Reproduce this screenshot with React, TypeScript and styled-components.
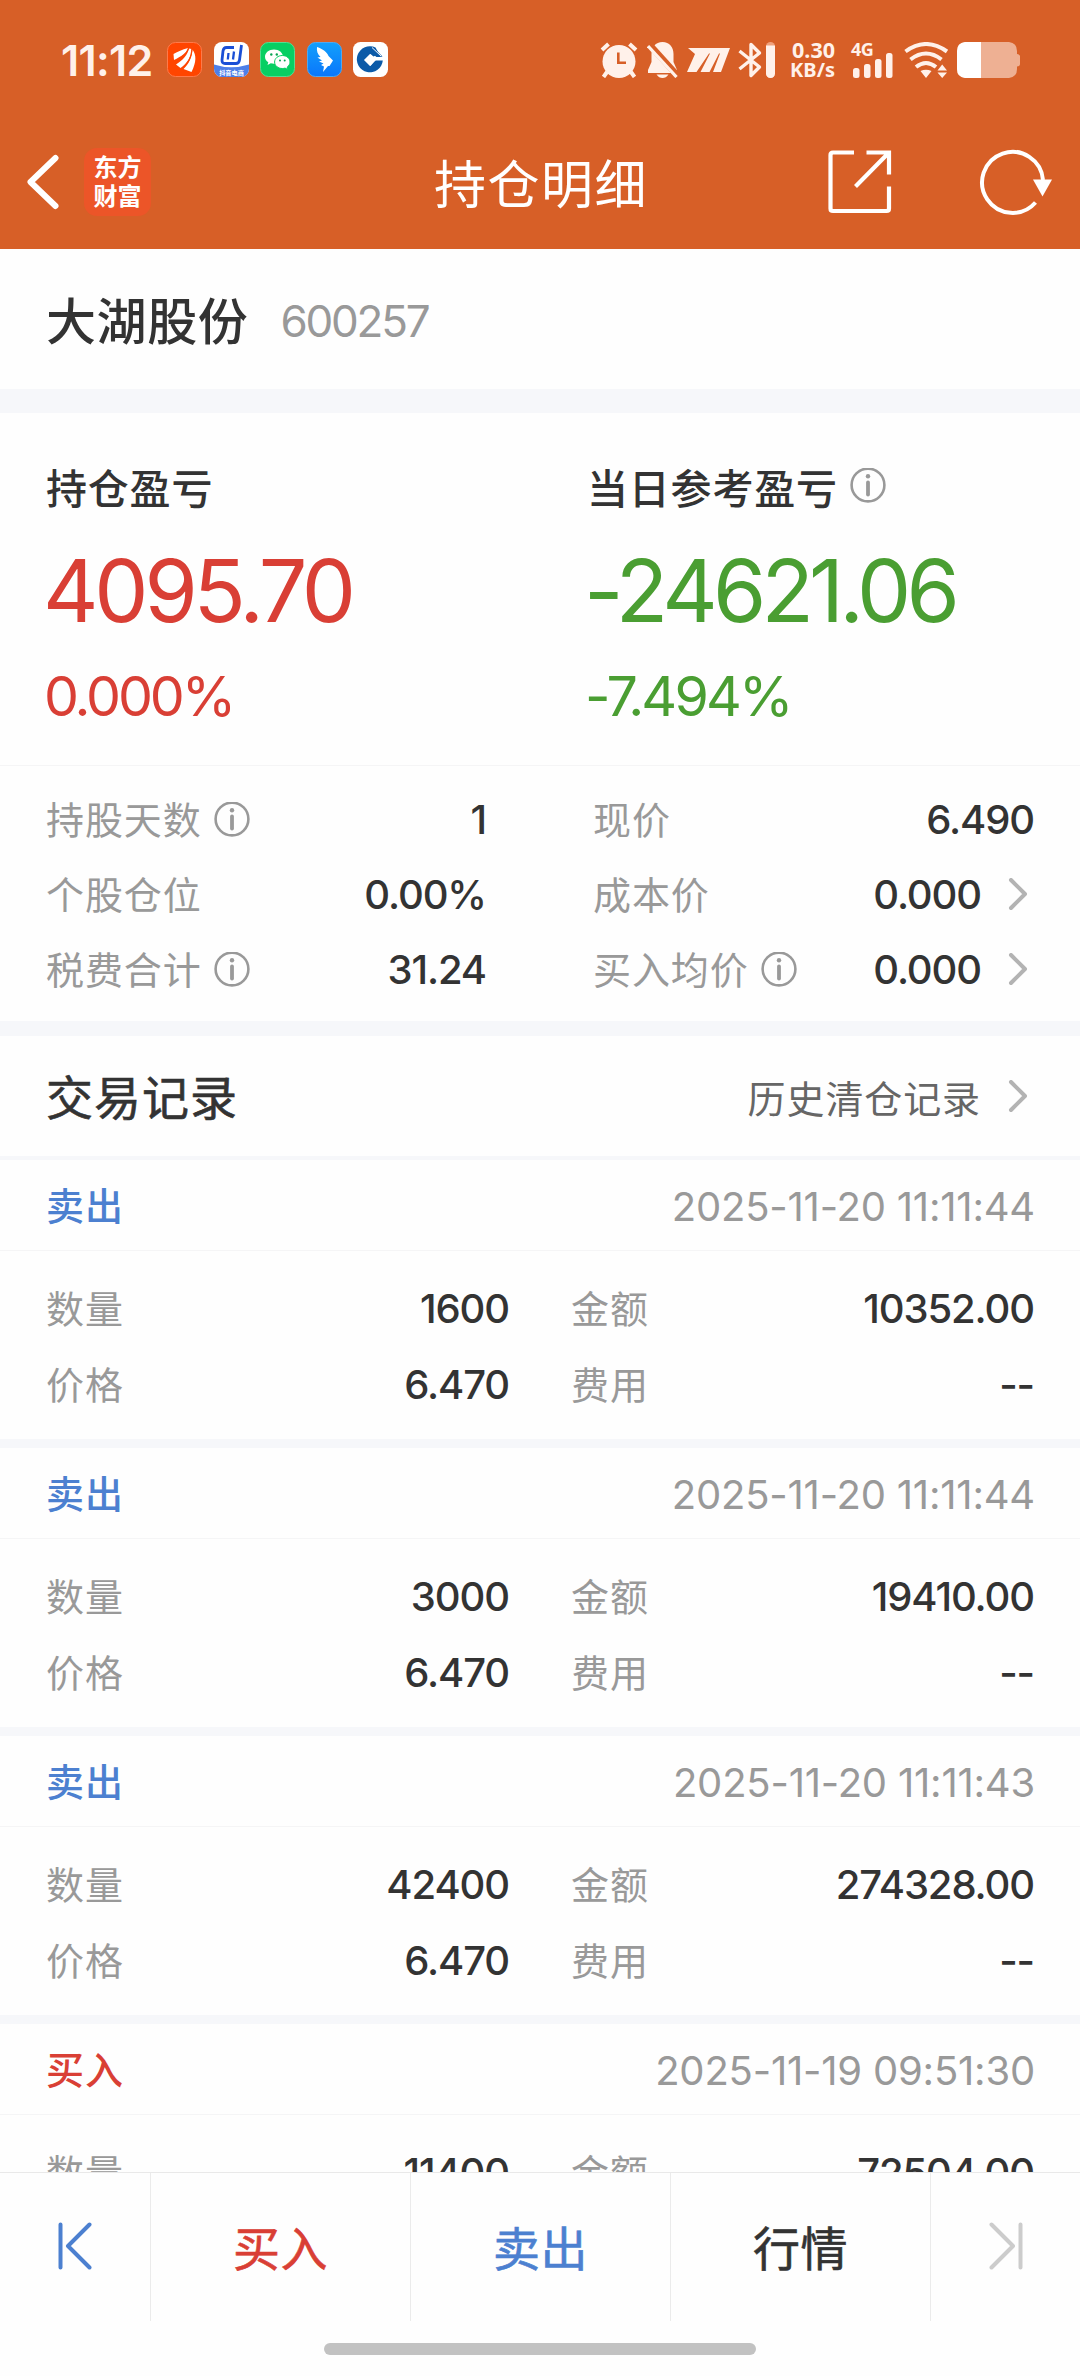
import React from "react";
import styled, { createGlobalStyle } from "styled-components";

const cjk = `"Noto Sans CJK SC", sans-serif`;
const num = `Inter, "Noto Sans CJK SC", sans-serif`;
const c = {
  brand: "#d75f27",
  page: "#fefefe",
  band: "#f6f7fa",
  hair: "#f5f5f6",
  ink: "#333333",
  mid: "#666666",
  soft: "#999999",
  red: "#d93f35",
  green: "#4a9e32",
  blue: "#4c80d0",
};

const Global = createGlobalStyle`
  * { box-sizing: border-box; }
  body { margin: 0; background: ${c.page}; }
`;

const Screen = styled.div`
  width: 1080px;
  height: 2376px;
  overflow: hidden;
  display: flex;
  flex-direction: column;
  background: ${c.page};
  color: ${c.ink};
  font-family: ${cjk};
  font-size: 38px;
  white-space: nowrap;
`;

const Top = styled.header`
  flex: none;
  height: 249px;
  background: ${c.brand};
  color: #fff;
`;
const StatusBar = styled.div`
  height: 119px;
  padding: 0 60px 0 61px;
  display: flex;
  align-items: center;
  color: #fff1ea;
`;
const Clock = styled.span`
  width: 106px;
  font: 600 43px/44px ${num};
  letter-spacing: -0.7px;
`;
const AppIcons = styled.div`
  display: flex;
  gap: 11.6px;
  flex: 1;
`;
const Glyph = styled.svg<{ $ml?: number }>`
  display: block;
  flex: none;
  margin-left: ${(p) => p.$ml ?? 0}px;
`;
const NetSpeed = styled.div`
  width: 46px;
  margin-left: 13px;
  display: flex;
  flex-direction: column;
  align-items: flex-end;
  font: 700 20px/20px "Noto Sans", sans-serif;
`;
const SpeedValue = styled.span`
  font-size: 21.5px;
`;
const Cellular = styled.div`
  width: 43px;
  height: 36px;
  margin-left: 16px;
  display: grid;
`;
const NetType = styled.span`
  grid-area: 1 / 1;
  margin-top: -3px;
  font: 700 18px/20px "Noto Sans", sans-serif;
  letter-spacing: -0.5px;
`;
const Bars = styled.svg`
  grid-area: 1 / 1;
  display: block;
`;

const TitleBar = styled.div`
  height: 130px;
  padding: 0 27px 5px;
  display: grid;
  grid-template-columns: 1fr auto 1fr;
  align-items: center;
`;
const TitleLeft = styled.div`
  display: flex;
  align-items: center;
  gap: 25px;
`;
const TitleRight = styled.div`
  display: flex;
  justify-content: flex-end;
  align-items: center;
  gap: 86px;
`;
const Title = styled.h1`
  margin: 0 0 0 2px;
  font: 400 52px/70px ${cjk};
  letter-spacing: 1.5px;
`;
const Logo = styled.div`
  width: 67px;
  height: 68px;
  padding-top: 3px;
  border-radius: 13px;
  background: #ec5528;
  text-align: center;
  font: 700 24px/29px ${cjk};
`;

const StockHead = styled.section`
  flex: none;
  height: 140px;
  padding: 0 46px 0;
  display: flex;
  align-items: center;
`;
const StockName = styled.h2`
  margin: -3px 32px 0 0;
  font: 500 50px/60px ${cjk};
  letter-spacing: 0.6px;
`;
const Code = styled.span`
  margin-top: 3px;
  font: 400 44px/50px ${num};
  letter-spacing: -2.2px;
  color: ${c.soft};
`;
const Band = styled.div<{ $h: number }>`
  flex: none;
  height: ${(p) => p.$h}px;
  background: ${c.band};
`;

const Profit = styled.section`
  flex: none;
  height: 353px;
  padding: 48px 46px 0;
  display: grid;
  grid-template-columns: 541px 1fr;
  border-bottom: 1px solid ${c.hair};
`;
const ProfitLabel = styled.div`
  height: 50px;
  display: flex;
  align-items: center;
  gap: 12px;
  font: 500 41px/50px ${cjk};
  letter-spacing: 0.8px;
`;
const ProfitValue = styled.div<{ $tone: string; $ls: number }>`
  margin: 30px 0 0 -3px;
  font: 400 86px/100px ${num};
  letter-spacing: ${(p) => p.$ls}px;
  color: ${(p) => p.$tone};
`;
const ProfitRate = styled.div<{ $tone: string; $ls: number }>`
  margin: 25px 0 0 -2px;
  font: 400 55.5px/60px ${num};
  letter-spacing: ${(p) => p.$ls}px;
  color: ${(p) => p.$tone};
`;

const Facts = styled.section`
  flex: none;
  height: 255px;
  padding: 16px 46px 0;
  display: grid;
  grid-template-columns: 440px 441px;
  grid-auto-rows: 75px;
  column-gap: 107px;
`;
const Fact = styled.div`
  display: flex;
  align-items: center;
`;
const Label = styled.span`
  margin: -4px 12px 0 0;
  font: 400 38px/50px ${cjk};
  letter-spacing: 0.9px;
  color: ${c.soft};
`;
const Value = styled.span`
  margin-left: auto;
  font: 500 40px/50px ${num};
  letter-spacing: -1.1px;
`;

const SectionHead = styled.section`
  flex: none;
  height: 120px;
  padding: 2px 46px 0 46px;
  display: flex;
  align-items: center;
`;
const SectionTitle = styled.h3`
  margin: -4px auto 0 0;
  font: 400 47px/60px ${cjk};
  letter-spacing: 1px;
  -webkit-text-stroke: 0.6px;
`;
const HistoryLink = styled.span`
  font: 400 38px/50px ${cjk};
  letter-spacing: 0.9px;
  color: ${c.mid};
`;

const List = styled.section`
  flex: 1;
  min-height: 0;
  overflow: hidden;
`;
const Record = styled.article`
  height: 288px;
  border-bottom: 9px solid ${c.band};
`;
const RecordHead = styled.div`
  height: 91px;
  padding: 0 45px 0 46px;
  display: flex;
  align-items: center;
  justify-content: space-between;
  border-bottom: 1px solid ${c.hair};
`;
const Side = styled.span<{ $tone: string }>`
  margin-top: -2px;
  font: 500 38px/50px ${cjk};
  letter-spacing: 0.9px;
  color: ${(p) => p.$tone};
`;
const Time = styled.time`
  margin-top: 3px;
  font: 400 40px/50px ${num};
  letter-spacing: -0.2px;
  color: ${c.soft};
`;
const RecordBody = styled.div`
  padding: 20px 46px 0;
  display: grid;
  grid-template-columns: 463px 463px;
  grid-auto-rows: 76px;
  column-gap: 62px;
`;

const Nav = styled.nav`
  flex: none;
  height: 149px;
  display: grid;
  grid-template-columns: 150px 260px 260px 260px 150px;
  border-top: 1px solid #e9e9e9;
`;
const NavItem = styled.div<{ $tone: string }>`
  display: flex;
  align-items: center;
  justify-content: center;
  padding-bottom: 2px;
  font: 400 47px/60px ${cjk};
  letter-spacing: 0.6px;
  -webkit-text-stroke: 0.6px;
  color: ${(p) => p.$tone};
  & + & {
    border-left: 1px solid #ebebeb;
  }
`;
const HomeArea = styled.div`
  flex: none;
  height: 55px;
  padding-top: 22px;
`;
const HomePill = styled.div`
  width: 432px;
  height: 12px;
  margin: 0 auto;
  border-radius: 6px;
  background: #c2c2c2;
`;

const Info = () => (
  <Glyph width="36" height="36" viewBox="0 0 36 36" fill="none" stroke={c.soft}>
    <circle cx="18" cy="17" r="16.400" strokeWidth="2.600" />
    <circle cx="18" cy="8.200" r="2.200" fill={c.soft} stroke="none" />
    <path d="M18 14.500V26.500" strokeWidth="3.800" strokeLinecap="round" />
  </Glyph>
);
const Chevron = () => (
  <Glyph $ml={27} width="26" height="34" viewBox="0 0 26 34" fill="none" stroke="#b3b3b3" strokeWidth="4" strokeLinecap="round" strokeLinejoin="round">
    <path d="M3 2L17 16L3 30" />
  </Glyph>
);

const AppTiles = () => (
  <AppIcons>
    <Glyph width="35" height="35" viewBox="0 0 35 35">
      <rect x=".5" y=".5" width="34" height="34" rx="8" fill="#ff4500" stroke="#ff7a4a" />
      <path d="M6.500 12C11 9.500 15 7.500 21 6C20 11 14 14.500 7 18Z" fill="#fff" />
      <path d="M9 22.500C16 18 20.500 13 22 6.500L24.500 7C24.500 15 20 21.500 13.500 26Z" fill="#fff" />
      <path d="M16.500 27C22.500 21 25 15 25.500 7.500C29.500 13 29.500 20 24.500 30Z" fill="#fff" />
      <path d="M7 19.500C14 16.500 19.500 12.500 21.800 6M14.500 27.500C21 22 24.500 15 25 7" fill="none" stroke="#ff4500" strokeWidth="1.200" />
    </Glyph>
    <Glyph width="35" height="35" viewBox="0 0 35 35">
      <rect width="35" height="35" rx="8" fill="#fff" />
      <path d="M0 22.500Q17 28 35 22.500V27a8 8 0 0 1-8 8H8a8 8 0 0 1-8-8Z" fill="#4e7fe8" />
      <g fill="none" stroke="#1a4fd6" strokeWidth="2.800">
        <path d="M20 5.500H12.500Q9.500 5.500 9 9L8 18Q7.800 21.500 11 21.500H22Q25 21.500 25.500 18L27.500 3" />
        <path d="M14.500 11L13.800 17.500M20 9.500L19 17.500" strokeWidth="2.300" />
      </g>
      <text x="17.500" y="33" textAnchor="middle" fontSize="6.200" fontWeight="700" fontFamily={cjk} fill="#fff">抖音电商</text>
    </Glyph>
    <Glyph width="35" height="35" viewBox="0 0 35 35">
      <rect x=".5" y=".5" width="34" height="34" rx="8" fill="#07cf63" stroke="#55dd92" />
      <path d="M14 7.500c-5 0-9 3.200-9 7.200 0 2.300 1.300 4.300 3.300 5.600L7.500 23l3.300-1.700c1 .3 2.100.4 3.200.4 5 0 9-3 9-7s-4-7.200-9-7.200Z" fill="#fff" />
      <path d="M22.300 13.500c-4.300 0-7.700 2.900-7.700 6.500s3.400 6.500 7.700 6.500c1 0 1.900-.1 2.700-.4l2.900 1.400-.7-2.400c1.700-1.200 2.800-3 2.800-5.100 0-3.600-3.400-6.500-7.700-6.500Z" fill="#fff" stroke="#07cf63" strokeWidth="1" />
      <g fill="#07a352">
        <circle cx="11.300" cy="12.500" r="1.200" /><circle cx="16.800" cy="12.500" r="1.200" />
        <circle cx="20" cy="18.500" r="1" /><circle cx="24.700" cy="18.500" r="1" />
      </g>
    </Glyph>
    <Glyph width="35" height="35" viewBox="0 0 35 35">
      <defs>
        <linearGradient id="wing" x1="0" y1="0" x2="0" y2="1">
          <stop offset="0" stopColor="#12a0fb" /><stop offset="1" stopColor="#0a76fb" />
        </linearGradient>
      </defs>
      <rect x=".5" y=".5" width="34" height="34" rx="8" fill="url(#wing)" stroke="#4fa8ee" />
      <path d="M10 5C16 7 20 10 21.500 14L26 18.500L22.500 24L21 24L16 30L17 24.500L14 23L16.500 21.500L12 19.500L15 18.500L10.500 15.500L13.500 15C10.500 12 9.500 9 10 5Z" fill="#fff" />
    </Glyph>
    <Glyph width="35" height="35" viewBox="0 0 35 35">
      <rect width="35" height="35" rx="7.500" fill="#fff" />
      <path d="M22.500 5.600A13 13 0 1 0 29.800 18.500H22L17.500 24L11.500 18L17.500 12L20.500 14.500L26 12Z" fill="#0b5aa8" />
      <path d="M24 9L29.500 14.500L24 15.500L20.500 12.500Z" fill="#0b5aa8" />
      <path d="M17 12L23 18L17 24L11 18Z" fill="#fff" />
      <path d="M19 5.500L28 14" stroke="#fff" strokeWidth="1" />
      <path d="M22 15H31V18H23Z" fill="#fff" />
    </Glyph>
  </AppIcons>
);

const StatusIcons = () => (
  <>
    <Glyph width="38" height="36" viewBox="0 0 38 36" fill="none" stroke="currentColor" strokeWidth="4">
      <path d="M2 8L8.500 2M29.500 2L36 8M7 30L3.500 35M31 30L34.500 35" />
      <circle cx="19" cy="19.500" r="16.500" fill="currentColor" stroke="none" />
      <path d="M18.300 10.500V20.800H26" stroke={c.brand} strokeWidth="2.600" />
    </Glyph>
    <Glyph $ml={9} width="31" height="36" viewBox="0 0 31 36">
      <path d="M15.500 0C8.500 0 4.500 5 4.500 12V20L1 28V31H30V28L26.500 20V12C26.500 5 22.500 0 15.500 0Z" fill="currentColor" />
      <path d="M9.500 32.500H21.500Q19 36 15.500 36T9.500 32.500Z" fill="currentColor" />
      <path d="M1.500 1.500L31 34" stroke={c.brand} strokeWidth="6.500" />
      <path d="M0 0L3 -1V10L0 8Z" fill={c.brand} />
      <path d="M1 4L29.500 35" stroke="currentColor" strokeWidth="3.200" />
    </Glyph>
    <Glyph $ml={9} width="43" height="24" viewBox="0 0 43 24" fill="currentColor">
      <path d="M1 0H43L34 24H26L33 5.500L32 5.500L22.500 24H13.500L23 5.500H22L9.500 24H0L8 6Z" />
    </Glyph>
    <Glyph $ml={8} width="38" height="36" viewBox="0 0 38 36">
      <path d="M1.500 9L21.500 25L13 33.500V2.500L21.500 11L1.500 27" fill="none" stroke="currentColor" strokeWidth="3.400" strokeLinejoin="round" />
      <rect x="28" y="0" width="9" height="36" rx="4.500" fill="#f0a17c" />
      <path d="M28 3.500H37V31.500A4.500 4.500 0 0 1 28 31.500Z" fill="currentColor" />
    </Glyph>
    <NetSpeed><SpeedValue>0.30</SpeedValue><span>KB/s</span></NetSpeed>
    <Cellular>
      <NetType>4G</NetType>
      <Bars width="43" height="36" viewBox="0 0 43 36" fill="currentColor">
        <rect x="2" y="26" width="6.500" height="10" rx="2.500" />
        <rect x="13" y="22" width="6.500" height="14" rx="2.500" />
        <rect x="24" y="17" width="6.500" height="19" rx="2.500" />
        <rect x="35" y="11" width="6.500" height="25" rx="2.500" />
      </Bars>
    </Cellular>
    <Glyph $ml={9.5} width="45" height="36" viewBox="0 0 45 36" fill="none" stroke="currentColor" strokeWidth="4">
      <path d="M1.500 9.500Q22 -5.500 43 9.500M6.500 17.500Q22 5.500 37.500 17.500M12 25Q22 17 32 25" />
      <path d="M16.500 29Q22 26.500 27.500 29L22 36ZM33.500 28.500L38.200 22.500L43 28.500ZM33.500 30.500H43L38.200 36Z" fill="currentColor" stroke="none" />
    </Glyph>
    <Glyph $ml={8.5} width="63" height="36" viewBox="0 0 63 36">
      <path d="M8 0H52Q60 1 60 9V12Q63 12.500 63 14.500V22Q63 24 60 24.500V27Q60 35 52 36H8Q0 35 0 27V9Q0 1 8 0Z" fill="#eeb093" />
      <path d="M24 0H8Q0 1 0 9V27Q0 35 8 36H24Z" fill="#fff" />
    </Glyph>
  </>
);

const facts = [
  { label: "持股天数", value: "1", info: true },
  { label: "现价", value: "6.490" },
  { label: "个股仓位", value: "0.00%" },
  { label: "成本价", value: "0.000", more: true },
  { label: "税费合计", value: "31.24", info: true },
  { label: "买入均价", value: "0.000", info: true, more: true },
];

type Trade = { side: string; time: string; qty: string; amount: string; price?: string };
const records: Trade[] = [
  { side: "卖出", time: "2025-11-20 11:11:44", qty: "1600", amount: "10352.00", price: "6.470" },
  { side: "卖出", time: "2025-11-20 11:11:44", qty: "3000", amount: "19410.00", price: "6.470" },
  { side: "卖出", time: "2025-11-20 11:11:43", qty: "42400", amount: "274328.00", price: "6.470" },
  { side: "买入", time: "2025-11-19 09:51:30", qty: "11400", amount: "72504.00" },
];

const FirstIcon = () => (
  <Glyph width="34" height="48" viewBox="0 0 34 48" fill="none" stroke="currentColor" strokeWidth="4" strokeLinecap="round" strokeLinejoin="round">
    <path d="M2.500 2.500V45.500M31.500 2.500L10 24L31.500 45.500" />
  </Glyph>
);
const LastIcon = () => (
  <Glyph width="34" height="48" viewBox="0 0 34 48" fill="none" stroke="currentColor" strokeWidth="4" strokeLinecap="round" strokeLinejoin="round">
    <path d="M31.500 2.500V45.500M2.500 2.500L24 24L2.500 45.500" />
  </Glyph>
);

export default function App() {
  return (
    <Screen>
      <Global />
      <Top>
        <StatusBar>
          <Clock>11:12</Clock>
          <AppTiles />
          <StatusIcons />
        </StatusBar>
        <TitleBar>
          <TitleLeft>
            <Glyph width="32" height="56" viewBox="0 0 32 56" fill="none" stroke="#fff" strokeWidth="6" strokeLinecap="round" strokeLinejoin="round">
              <path d="M28.500 4L3.500 28L28.500 52" />
            </Glyph>
            <Logo>东方<br />财富</Logo>
          </TitleLeft>
          <Title>持仓明细</Title>
          <TitleRight>
            <Glyph width="64" height="64" viewBox="0 0 64 64" fill="none" stroke="#fff" strokeWidth="4.200">
              <path d="M26 2.500H5Q2.500 2.500 2.500 5V58.500Q2.500 61 5 61H58.500Q61 61 61 58.500V36.500M38.500 2.500H61V24.500M61 2.500L27.500 36.500" />
            </Glyph>
            <Glyph width="75" height="66" viewBox="0 0 75 66" fill="none" stroke="#fff" strokeWidth="4">
              <path d="M57.500 53.500A30.500 30.500 0 1 1 65 31" />
              <path d="M55 30.500H74L64.500 47.500Z" fill="#fff" stroke="none" />
            </Glyph>
          </TitleRight>
        </TitleBar>
      </Top>

      <StockHead>
        <StockName>大湖股份</StockName>
        <Code>600257</Code>
      </StockHead>
      <Band $h={24} />

      <Profit>
        <div>
          <ProfitLabel>持仓盈亏</ProfitLabel>
          <ProfitValue $tone={c.red} $ls={-4.2}>4095.70</ProfitValue>
          <ProfitRate $tone={c.red} $ls={-3.1}>0.000%</ProfitRate>
        </div>
        <div>
          <ProfitLabel>当日参考盈亏<Info /></ProfitLabel>
          <ProfitValue $tone={c.green} $ls={-4.8}>-24621.06</ProfitValue>
          <ProfitRate $tone={c.green} $ls={-2.8}>-7.494%</ProfitRate>
        </div>
      </Profit>

      <Facts>
        {facts.map((f) => (
          <Fact key={f.label}>
            <Label>{f.label}</Label>
            {f.info && <Info />}
            <Value>{f.value}</Value>
            {f.more && <Chevron />}
          </Fact>
        ))}
      </Facts>
      <Band $h={15} />

      <SectionHead>
        <SectionTitle>交易记录</SectionTitle>
        <HistoryLink>历史清仓记录</HistoryLink>
        <Chevron />
      </SectionHead>
      <Band $h={4} />

      <List>
        {records.map((r, i) => (
          <Record key={i}>
            <RecordHead>
              <Side $tone={r.side === "买入" ? c.red : c.blue}>{r.side}</Side>
              <Time>{r.time}</Time>
            </RecordHead>
            <RecordBody>
              <Fact><Label>数量</Label><Value>{r.qty}</Value></Fact>
              <Fact><Label>金额</Label><Value>{r.amount}</Value></Fact>
              {r.price && (
                <>
                  <Fact><Label>价格</Label><Value>{r.price}</Value></Fact>
                  <Fact><Label>费用</Label><Value>--</Value></Fact>
                </>
              )}
            </RecordBody>
          </Record>
        ))}
      </List>

      <Nav>
        <NavItem $tone={c.blue}><FirstIcon /></NavItem>
        <NavItem $tone={c.red}>买入</NavItem>
        <NavItem $tone={c.blue}>卖出</NavItem>
        <NavItem $tone={c.ink}>行情</NavItem>
        <NavItem $tone="#cccccc"><LastIcon /></NavItem>
      </Nav>
      <HomeArea><HomePill /></HomeArea>
    </Screen>
  );
}
